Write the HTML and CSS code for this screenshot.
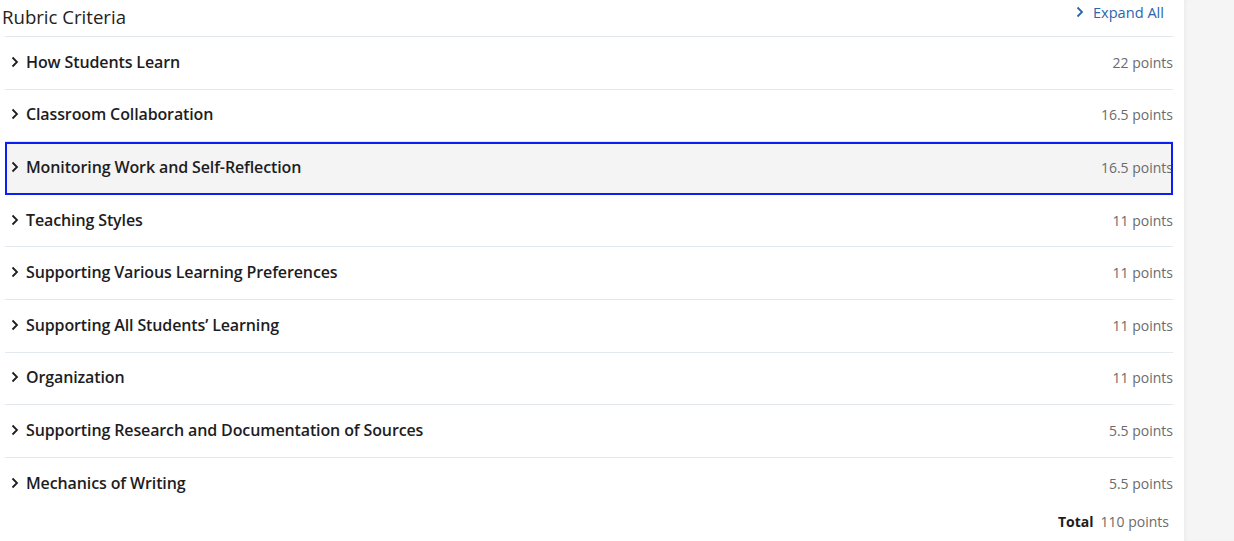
FILE: index.html
```html
<!DOCTYPE html>
<html lang="en">
<head>
<meta charset="utf-8">
<title>Rubric Criteria</title>
<link rel="stylesheet" href="styles.css">
</head>
<body>
<div class="layout">
  <main class="panel">
    <div class="rubric-head">
      <h2 class="rubric-title">Rubric Criteria</h2>
      <button class="expand-all" type="button">
        <svg class="chev chev-blue" viewBox="0 0 8 12" width="8" height="12"><path d="M1.5 1.5 6 6l-4.5 4.5" fill="none" stroke="currentColor" stroke-width="1.8"/></svg>
        <span>Expand All</span>
      </button>
    </div>
    <ul class="criteria">
      <li class="criterion"><svg class="chev" viewBox="0 0 8 12" width="8" height="12"><path d="M1.5 1.5 6 6l-4.5 4.5" fill="none" stroke="currentColor" stroke-width="1.8"/></svg><span class="name">How Students Learn</span><span class="pts">22 points</span></li>
      <li class="criterion"><svg class="chev" viewBox="0 0 8 12" width="8" height="12"><path d="M1.5 1.5 6 6l-4.5 4.5" fill="none" stroke="currentColor" stroke-width="1.8"/></svg><span class="name">Classroom Collaboration</span><span class="pts">16.5 points</span></li>
      <li class="criterion is-focused"><svg class="chev" viewBox="0 0 8 12" width="8" height="12"><path d="M1.5 1.5 6 6l-4.5 4.5" fill="none" stroke="currentColor" stroke-width="1.8"/></svg><span class="name">Monitoring Work and Self-Reflection</span><span class="pts">16.5 points</span></li>
      <li class="criterion"><svg class="chev" viewBox="0 0 8 12" width="8" height="12"><path d="M1.5 1.5 6 6l-4.5 4.5" fill="none" stroke="currentColor" stroke-width="1.8"/></svg><span class="name">Teaching Styles</span><span class="pts">11 points</span></li>
      <li class="criterion"><svg class="chev" viewBox="0 0 8 12" width="8" height="12"><path d="M1.5 1.5 6 6l-4.5 4.5" fill="none" stroke="currentColor" stroke-width="1.8"/></svg><span class="name">Supporting Various Learning Preferences</span><span class="pts">11 points</span></li>
      <li class="criterion"><svg class="chev" viewBox="0 0 8 12" width="8" height="12"><path d="M1.5 1.5 6 6l-4.5 4.5" fill="none" stroke="currentColor" stroke-width="1.8"/></svg><span class="name">Supporting All Students’ Learning</span><span class="pts">11 points</span></li>
      <li class="criterion"><svg class="chev" viewBox="0 0 8 12" width="8" height="12"><path d="M1.5 1.5 6 6l-4.5 4.5" fill="none" stroke="currentColor" stroke-width="1.8"/></svg><span class="name">Organization</span><span class="pts">11 points</span></li>
      <li class="criterion"><svg class="chev" viewBox="0 0 8 12" width="8" height="12"><path d="M1.5 1.5 6 6l-4.5 4.5" fill="none" stroke="currentColor" stroke-width="1.8"/></svg><span class="name">Supporting Research and Documentation of Sources</span><span class="pts">5.5 points</span></li>
      <li class="criterion"><svg class="chev" viewBox="0 0 8 12" width="8" height="12"><path d="M1.5 1.5 6 6l-4.5 4.5" fill="none" stroke="currentColor" stroke-width="1.8"/></svg><span class="name">Mechanics of Writing</span><span class="pts">5.5 points</span></li>
    </ul>
    <div class="total"><strong>Total</strong><span>110 points</span></div>
  </main>
  <aside class="side"></aside>
</div>
</body>
</html>
```

FILE: styles.css
```css
html, body {
  margin: 0;
  padding: 0;
  height: 100%;
}

body {
  font-family: "Open Sans", "Noto Sans", sans-serif;
  color: #1d1d1f;
  background: #fff;
}

.layout {
  display: flex;
  height: 541px;
  overflow: hidden;
}

.panel {
  width: 1184px;
  flex: none;
  background: #fff;
  box-sizing: border-box;
  padding: 0 11px 0 5px;
}

.side {
  flex: 1;
  background: #f5f5f5;
  box-shadow: inset 3px 0 4px -2px rgba(0, 0, 0, 0.05);
}

.rubric-head {
  display: flex;
  align-items: flex-start;
  justify-content: space-between;
  height: 36px;
  border-bottom: 1px solid #e3e7ee;
}

.rubric-title {
  margin: 5px 0 0 -3px;
  font-size: 18.6px;
  font-weight: 400;
  line-height: 24px;
  color: #222;
}

.expand-all {
  display: flex;
  align-items: center;
  gap: 9px;
  margin: 2px 9px 0 0;
  padding: 0;
  border: 0;
  background: none;
  font: inherit;
  font-size: 14.6px;
  line-height: 20px;
  color: #2b65b0;
  cursor: pointer;
}

.chev {
  display: block;
  flex: none;
  color: #1e1e1e;
}

.chev-blue {
  color: #2b65b0;
}

.criteria {
  list-style: none;
  margin: 0;
  padding: 0;
}

.criterion {
  display: flex;
  align-items: center;
  height: 52.6px;
  box-sizing: border-box;
  padding: 0 0 0 6px;
  border-bottom: 1px solid #e3e7ee;
}

.criterion:last-child {
  border-bottom: 0;
}

.criterion .chev {
  margin-right: 7px;
  margin-top: -2px;
}

.name {
  font-size: 16px;
  font-weight: 600;
  line-height: 22px;
  letter-spacing: -0.12px;
  color: #1d1d1f;
  margin-top: -2px;
}

.pts {
  margin-left: auto;
  font-size: 14px;
  line-height: 20px;
  color: #6b6b6b;
}

.is-focused {
  background: #f4f4f4;
  outline: 2px solid #0a1ff0;
  outline-offset: -2px;
  border-bottom-color: transparent;
}

.total {
  display: flex;
  justify-content: flex-end;
  gap: 7px;
  padding: 2px 4px 0 0;
  font-size: 14px;
  line-height: 20px;
}

.total strong {
  font-weight: 700;
  color: #1d1d1f;
}

.total span {
  color: #6b6b6b;
}
```
